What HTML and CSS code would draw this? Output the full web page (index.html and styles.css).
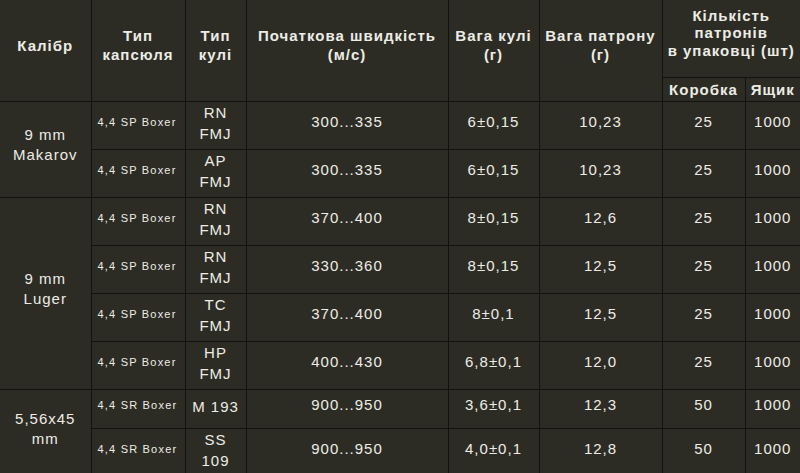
FILE: index.html
```html
<!DOCTYPE html>
<html lang="uk">
<head>
<meta charset="utf-8">
<link rel="stylesheet" href="styles.css">
</head>
<body>
<table class="ammo">
  <colgroup>
    <col class="c1"><col class="c2"><col class="c3"><col class="c4"><col class="c5"><col class="c6"><col class="c7"><col class="c8">
  </colgroup>
  <thead>
    <tr class="h1">
      <th rowspan="2" class="main">Калібр</th>
      <th rowspan="2" class="main">Тип<br>капсюля</th>
      <th rowspan="2" class="main">Тип<br>кулі</th>
      <th rowspan="2" class="main">Початкова швидкість<br>(м/с)</th>
      <th rowspan="2" class="main">Вага кулі<br>(г)</th>
      <th rowspan="2" class="main">Вага патрону<br>(г)</th>
      <th colspan="2" class="qty">Кількість<br>патронів<br>в упаковці (шт)</th>
    </tr>
    <tr class="h2">
      <th>Коробка</th>
      <th>Ящик</th>
    </tr>
  </thead>
  <tbody>
    <tr class="r2">
      <td rowspan="2" class="cal">9 mm<br>Makarov</td>
      <td class="cap">4,4 SP Boxer</td>
      <td class="bt">RN<br>FMJ</td>
      <td>300...335</td>
      <td>6±0,15</td>
      <td>10,23</td>
      <td>25</td>
      <td>1000</td>
    </tr>
    <tr class="r2">
      <td class="cap">4,4 SP Boxer</td>
      <td class="bt">AP<br>FMJ</td>
      <td>300...335</td>
      <td>6±0,15</td>
      <td>10,23</td>
      <td>25</td>
      <td>1000</td>
    </tr>
    <tr class="r2">
      <td rowspan="4" class="cal">9 mm<br>Luger</td>
      <td class="cap">4,4 SP Boxer</td>
      <td class="bt">RN<br>FMJ</td>
      <td>370...400</td>
      <td>8±0,15</td>
      <td>12,6</td>
      <td>25</td>
      <td>1000</td>
    </tr>
    <tr class="r2">
      <td class="cap">4,4 SP Boxer</td>
      <td class="bt">RN<br>FMJ</td>
      <td>330...360</td>
      <td>8±0,15</td>
      <td>12,5</td>
      <td>25</td>
      <td>1000</td>
    </tr>
    <tr class="r2">
      <td class="cap">4,4 SP Boxer</td>
      <td class="bt">TC<br>FMJ</td>
      <td>370...400</td>
      <td>8±0,1</td>
      <td>12,5</td>
      <td>25</td>
      <td>1000</td>
    </tr>
    <tr class="r2">
      <td class="cap">4,4 SP Boxer</td>
      <td class="bt">HP<br>FMJ</td>
      <td>400...430</td>
      <td>6,8±0,1</td>
      <td>12,0</td>
      <td>25</td>
      <td>1000</td>
    </tr>
    <tr class="r1">
      <td rowspan="2" class="cal">5,56x45<br>mm</td>
      <td class="cap">4,4 SR Boxer</td>
      <td class="bt">M 193</td>
      <td>900...950</td>
      <td>3,6±0,1</td>
      <td>12,3</td>
      <td>50</td>
      <td>1000</td>
    </tr>
    <tr class="r2">
      <td class="cap">4,4 SR Boxer</td>
      <td class="bt">SS<br>109</td>
      <td>900...950</td>
      <td>4,0±0,1</td>
      <td>12,8</td>
      <td>50</td>
      <td>1000</td>
    </tr>
  </tbody>
</table>
</body>
</html>
```

FILE: styles.css
```css
html, body {
  margin: 0;
  padding: 0;
  background: #2c2c24;
}

body {
  width: 800px;
  height: 473px;
  overflow: hidden;
  font-family: "Liberation Sans", Arial, sans-serif;
  color: #ececE6;
}

.ammo {
  width: 800px;
  table-layout: fixed;
  border-collapse: collapse;
  border-style: hidden;
  background: #2c2c24;
}

.c1 { width: 91px; }
.c2 { width: 94px; }
.c3 { width: 61px; }
.c4 { width: 202px; }
.c5 { width: 91px; }
.c6 { width: 123px; }
.c7 { width: 83px; }
.c8 { width: 55px; }

.ammo th,
.ammo td {
  border: 1px solid #121210;
  text-align: center;
  vertical-align: middle;
  padding: 0;
  letter-spacing: 1px;
}

.ammo th {
  font-size: 15px;
  font-weight: bold;
  line-height: 19px;
}

.ammo th.main {
  padding-bottom: 10px;
}

.h1 { height: 77px; }
.h2 { height: 24px; }

.ammo .qty {
  line-height: 17.5px;
  padding-bottom: 11px;
}

.ammo td {
  font-size: 15px;
  line-height: 21px;
  padding-bottom: 8px;
}

.ammo td.bt {
  padding-bottom: 4px;
}

.r2 { height: 48px; }
.r1 { height: 39px; }

.ammo td.cal {
  line-height: 20px;
  padding-bottom: 8px;
}

.ammo td.cap {
  font-size: 11px;
  letter-spacing: 1.2px;
  text-align: left;
  padding-left: 6px;
  padding-bottom: 6px;
}
```
